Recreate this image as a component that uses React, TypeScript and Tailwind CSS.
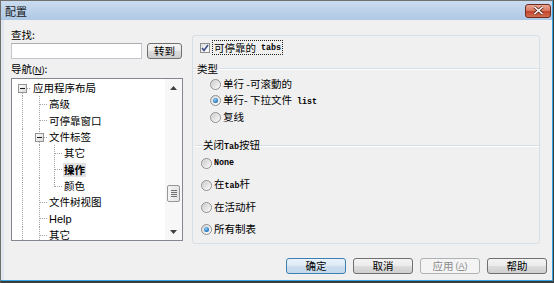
import React from "react";

const MONO = "font-['Liberation_Mono',monospace] text-[8.4px] font-bold";

function M({ children }: { children: React.ReactNode }) {
  return <span className={MONO}>{children}</span>;
}

type GK = "blank" | "pipe" | "tee" | "corner" | "rootbox" | "box";

function Guide({ w, x, h, kind }: { w: number; x: number; h: number; kind: GK }) {
  const c = "#a3a3a3";
  const m = Math.floor(h / 2);
  const lx = x + 0.5;
  const my = m + 0.5;
  const dash = "1 1";
  return (
    <svg width={w} height={h} className="block shrink-0" shapeRendering="crispEdges">
      {(kind === "pipe" || kind === "tee") && (
        <line x1={lx} y1={0} x2={lx} y2={h} stroke={c} strokeDasharray={dash} />
      )}
      {kind === "corner" && (
        <line x1={lx} y1={0} x2={lx} y2={my} stroke={c} strokeDasharray={dash} />
      )}
      {(kind === "tee" || kind === "corner") && (
        <line x1={lx} y1={my} x2={w} y2={my} stroke={c} strokeDasharray={dash} />
      )}
      {kind === "box" && (
        <line x1={lx} y1={0} x2={lx} y2={m - 4} stroke={c} strokeDasharray={dash} />
      )}
      {(kind === "box" || kind === "rootbox") && (
        <>
          <line x1={lx} y1={m + 5} x2={lx} y2={h} stroke={c} strokeDasharray={dash} />
          <line x1={x + 5} y1={my} x2={w} y2={my} stroke={c} strokeDasharray={dash} />
          <defs>
            <linearGradient id={"eg" + kind} x1="0" y1="0" x2="1" y2="1">
              <stop offset="0" stopColor="#ffffff" />
              <stop offset="1" stopColor="#d8d8d8" />
            </linearGradient>
          </defs>
          <rect x={x - 4 + 0.5} y={m - 4 + 0.5} width={8} height={8} fill={"url(#eg" + kind + ")"} stroke="#949494" />
          <line x1={x - 2} y1={my} x2={x + 3} y2={my} stroke="#1a1a1a" />
        </>
      )}
    </svg>
  );
}

type Row = { label: React.ReactNode; level: number; h: number; guides: GK[]; selected?: boolean; help?: boolean };

const rows: Row[] = [
  { label: "应用程序布局", level: 0, h: 16, guides: ["rootbox"] },
  { label: "高级", level: 1, h: 16, guides: ["pipe", "tee"] },
  { label: "可停靠窗口", level: 1, h: 17, guides: ["pipe", "tee"] },
  { label: "文件标签", level: 1, h: 16, guides: ["pipe", "box"] },
  { label: "其它", level: 2, h: 16, guides: ["pipe", "pipe", "tee"] },
  { label: "操作", level: 2, h: 17, guides: ["pipe", "pipe", "tee"], selected: true },
  { label: "颜色", level: 2, h: 16, guides: ["pipe", "pipe", "corner"] },
  { label: "文件树视图", level: 1, h: 16, guides: ["pipe", "tee"] },
  { label: "Help", level: 1, h: 17, guides: ["pipe", "tee"], help: true },
  { label: "其它", level: 1, h: 16, guides: ["pipe", "tee"] },
];

const colW = [17, 16, 15];
const colX = [8, 8, 7];

function Tree() {
  return (
    <div className="flex-1 overflow-hidden pl-[2px] pt-[1px] flex flex-col">
      {rows.map((r, i) => (
        <div key={i} className="flex items-center shrink-0" style={{ height: r.h }}>
          {r.guides.map((g, j) => (
            <Guide key={j} w={colW[j]} x={colX[j]} h={r.h} kind={g} />
          ))}
          <span
            className={
              "ml-[1px] px-[1px] whitespace-nowrap leading-[14px] " +
              (r.selected ? "bg-[#e2e2e2] font-bold " : "") +
              (r.help ? "font-['Liberation_Sans',sans-serif] text-[11px]" : "")
            }
          >
            {r.label}
          </span>
        </div>
      ))}
    </div>
  );
}

function Scrollbar() {
  return (
    <div className="w-[17px] flex flex-col bg-[#f7f7f7]">
      <div className="h-[17px] flex items-center justify-center">
        <svg width="7" height="4" className="block">
          <path d="M3.5 0 L7 4 L0 4 Z" fill="#404040" />
        </svg>
      </div>
      <div className="flex-1 flex flex-col items-center">
        <div className="mt-[89px] w-[13px] h-[17px] rounded-[2px] border border-[#969696] bg-[linear-gradient(90deg,#f4f4f4,#e4e4e4)] flex flex-col items-center justify-center gap-[1px]">
          <div className="w-[6px] h-[1px] bg-[#707070]" />
          <div className="w-[6px] h-[1px] bg-[#707070]" />
          <div className="w-[6px] h-[1px] bg-[#707070]" />
          <div className="w-[6px] h-[1px] bg-[#707070]" />
        </div>
      </div>
      <div className="h-[17px] flex items-center justify-center">
        <svg width="7" height="4" className="block">
          <path d="M0 0 L7 0 L3.5 4 Z" fill="#404040" />
        </svg>
      </div>
    </div>
  );
}

function Btn({ children, w, variant = "normal" }: { children: React.ReactNode; w: string; variant?: "normal" | "default" | "disabled" }) {
  const base = "h-[16px] rounded-[3px] border flex items-center justify-center leading-none shrink-0 ";
  const v =
    variant === "default"
      ? "border-[#3c7fb1] bg-[linear-gradient(180deg,#eaf3fb_0%,#dce9f5_50%,#cddff0_50%,#c3d8ec_100%)] text-black"
      : variant === "disabled"
      ? "border-[#adb2b5] bg-[#f4f4f4] text-[#8a8a8a]"
      : "border-[#707070] bg-[linear-gradient(180deg,#f3f3f3_0%,#ebebeb_50%,#dddddd_50%,#cfcfcf_100%)] text-black";
  return <div className={base + v + " " + w}>{children}</div>;
}

function Radio({ on }: { on?: boolean }) {
  return (
    <div className="w-[11px] h-[11px] rounded-full border border-[#8f8f8f] bg-[linear-gradient(135deg,#d6d6d6,#ffffff)] flex items-center justify-center shrink-0">
      {on ? (
        <div className="w-[5px] h-[5px] rounded-full bg-[radial-gradient(circle_at_40%_35%,#8fd0f8,#1f6fb8_70%,#0d4a8a)]" />
      ) : (
        <div className="w-[7px] h-[7px] rounded-full bg-[linear-gradient(135deg,#cfcfcf,#f6f6f6)]" />
      )}
    </div>
  );
}

function Checkbox() {
  return (
    <div className="w-[10px] h-[10px] border border-[#8f8f8f] bg-[linear-gradient(135deg,#e0e0e0,#ffffff)] flex items-center justify-center shrink-0">
      <svg width="8" height="8" className="block">
        <path d="M1 4 L3 6.5 L7 1" stroke="#3c4f8a" strokeWidth="1.6" fill="none" />
      </svg>
    </div>
  );
}

function GroupHeader({ lead, label, h, cls }: { lead: string; label: React.ReactNode; h: string; cls: string }) {
  return (
    <div className={"flex items-center " + h + " " + cls}>
      <div className={"h-[2px] border-t border-[#d5dfe5] border-b border-b-white " + lead} />
      <span className="whitespace-nowrap">{label}</span>
      <div className="flex-1 h-[2px] border-t border-[#d5dfe5] border-b border-b-white" />
    </div>
  );
}

export default function App() {
  return (
    <div className="w-[554px] h-[283px] overflow-hidden border-l border-t border-[#707070] border-r border-r-[#3c3c3c] border-b-2 border-b-[#3c3c3c] font-['Noto_Sans_CJK_SC','Noto_Sans',sans-serif] text-[10.5px] leading-[14px] text-black">
      <div className="h-full flex flex-col border-r border-b border-r-[#33a5e0] border-b-[#33a5e0] bg-[#f0f0f0]">
        {/* title bar */}
        <div className="h-[19px] shrink-0 flex items-center justify-between pl-[4px] pr-[1px] bg-[linear-gradient(180deg,#cbdcef,#aec8e6)]">
          <span className="text-[11px] text-[#1a1a1a]">配置</span>
          <div className="w-[26px] h-[14px] rounded-[3px] border border-[#6d2a1f] bg-[linear-gradient(180deg,#eaa897_0%,#d97a63_45%,#c2442c_55%,#d36d50_100%)] flex items-center justify-center">
            <svg width="11" height="9" className="block">
              <path d="M1.5 1 L9.5 8 M9.5 1 L1.5 8" stroke="#5a2a20" strokeWidth="3" />
              <path d="M1.5 1 L9.5 8 M9.5 1 L1.5 8" stroke="#ffffff" strokeWidth="1.6" />
            </svg>
          </div>
        </div>

        {/* body */}
        <div className="flex-1 flex flex-col border-l-[3px] border-l-[#dfe6ee]">
          <div className="flex items-start pl-[7px]">
            {/* left column */}
            <div className="w-[172px] pt-[8px] flex flex-col shrink-0">
              <div className="h-[14px]">查找:</div>
              <div className="mt-[1px] flex gap-[5px] h-[16px]">
                <div className="w-[131px] h-[16px] bg-white border border-[#c3c6cc] border-t-[#abadb3]" />
                <Btn w="w-[35px]">转到</Btn>
              </div>
              <div className="mt-[3px] h-[14px]">
                导航<span className="font-['Liberation_Sans',sans-serif] text-[9px]">(<span className="underline">N</span>)</span>:
              </div>
              <div className="mt-[2px] h-[163px] border border-[#828790] bg-white flex overflow-hidden">
                <Tree />
                <Scrollbar />
              </div>
            </div>

            {/* right panel */}
            <div className="ml-[9px] mt-[15px] w-[348px] h-[209px] border border-[#d5dfe5] rounded-[3px] flex flex-col shrink-0">
              <div className="mt-[4px] h-[15px] flex items-center pl-[7px]">
                <Checkbox />
                <span className="ml-[2px] h-[15px] px-[1px] border border-dotted border-[#222] flex items-center whitespace-nowrap">
                  可停靠的<M>&nbsp;tabs</M>
                </span>
              </div>

              <GroupHeader lead="w-[4px]" label="类型" h="h-[14px]" cls="mt-[7px]" />
              <div className="flex items-center h-[16px] pl-[17px] gap-[2px]">
                <Radio />
                <span className="whitespace-nowrap">单行 -可滚動的</span>
              </div>
              <div className="flex items-center h-[17px] pl-[17px] gap-[2px]">
                <Radio on />
                <span className="whitespace-nowrap">
                  单行- 下拉文件<M>&nbsp;list</M>
                </span>
              </div>
              <div className="flex items-center h-[16px] pl-[17px] gap-[2px]">
                <Radio />
                <span className="whitespace-nowrap">复线</span>
              </div>

              <GroupHeader
                lead="w-[8px]"
                label={
                  <>
                    关闭<M>Tab</M>按钮
                  </>
                }
                h="h-[12px]"
                cls="mt-[15px] ml-[2px]"
              />
              <div className="flex items-center h-[22px] pl-[8px] gap-[2px]">
                <Radio />
                <M>None</M>
              </div>
              <div className="flex items-center h-[22px] pl-[8px] gap-[2px]">
                <Radio />
                <span className="whitespace-nowrap">
                  在<M>tab</M>杆
                </span>
              </div>
              <div className="flex items-center h-[22px] pl-[8px] gap-[2px]">
                <Radio />
                <span className="whitespace-nowrap">在活动杆</span>
              </div>
              <div className="flex items-center h-[22px] pl-[8px] gap-[2px]">
                <Radio on />
                <span className="whitespace-nowrap">所有制表</span>
              </div>
            </div>
          </div>

          {/* buttons */}
          <div className="flex justify-end gap-[7px] pr-[5px] mt-[14px]">
            <Btn w="w-[60px]" variant="default">确定</Btn>
            <Btn w="w-[60px]">取消</Btn>
            <Btn w="w-[60px]" variant="disabled">
              应用<span className="font-['Liberation_Sans',sans-serif] text-[9px] ml-[2px]">(<span className="underline">A</span>)</span>
            </Btn>
            <Btn w="w-[60px]">帮助</Btn>
          </div>
        </div>
      </div>
    </div>
  );
}
